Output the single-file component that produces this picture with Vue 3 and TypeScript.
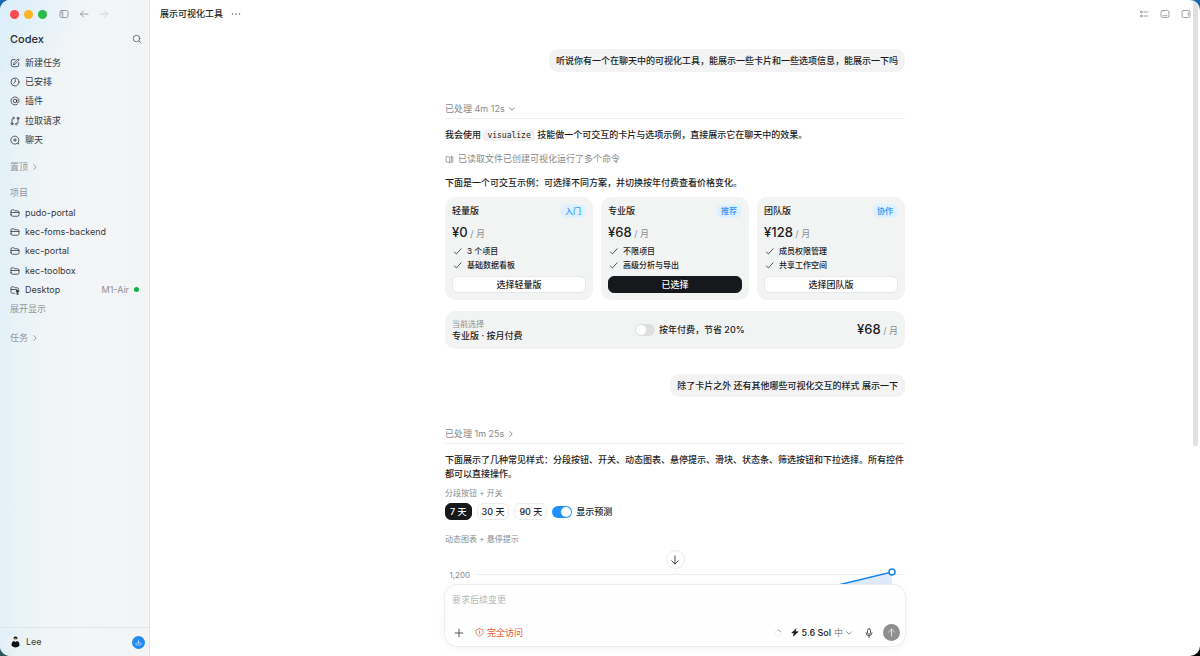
<script setup lang="ts">
import { computed, ref } from 'vue'

interface Plan {
  id: string
  name: string
  tag: string
  price: number
  features: string[]
}

const navItems = [
  { icon: 'compose', label: '新建任务' },
  { icon: 'clock', label: '已安排' },
  { icon: 'at', label: '插件' },
  { icon: 'pull', label: '拉取请求' },
  { icon: 'chat', label: '聊天' },
]

const projects = [
  { name: 'pudo-portal', host: '' },
  { name: 'kec-foms-backend', host: '' },
  { name: 'kec-portal', host: '' },
  { name: 'kec-toolbox', host: '' },
  { name: 'Desktop', host: 'M1-Air' },
]

const plans: Plan[] = [
  { id: 'lite', name: '轻量版', tag: '入门', price: 0, features: ['3 个项目', '基础数据看板'] },
  { id: 'pro', name: '专业版', tag: '推荐', price: 68, features: ['不限项目', '高级分析与导出'] },
  { id: 'team', name: '团队版', tag: '协作', price: 128, features: ['成员权限管理', '共享工作空间'] },
]

const ranges = [7, 30, 90]
const selectedId = ref('pro')
const yearly = ref(false)
const range = ref(7)
const forecast = ref(true)
const draft = ref('')

const selected = computed(() => plans.find((p) => p.id === selectedId.value) ?? plans[0])
function cost(price: number): number {
  return yearly.value ? Math.round(price * 0.8) : price
}
</script>

<template>
  <div class="desktop">
    <div class="window">
      <aside class="sidebar">
        <div class="chrome">
          <i class="light red"></i><i class="light amber"></i><i class="light green"></i>
          <button class="icon-btn panel" aria-label="侧边栏">
            <svg viewBox="0 0 20 20"><rect x="2" y="3" width="16" height="14" rx="3" /><path d="M7.5 3v14M4.5 7h1M4.5 10h1" /></svg>
          </button>
          <button class="icon-btn" aria-label="后退">
            <svg viewBox="0 0 20 20"><path d="M18 10H3M9 4l-6 6 6 6" /></svg>
          </button>
          <button class="icon-btn faint" aria-label="前进">
            <svg viewBox="0 0 20 20"><path d="M2 10h15M11 4l6 6-6 6" /></svg>
          </button>
        </div>

        <div class="brand">
          <h1>Codex</h1>
          <button class="icon-btn dark" aria-label="搜索">
            <svg viewBox="0 0 20 20"><circle cx="9" cy="9" r="6.5" /><path d="M14 14l4 4" /></svg>
          </button>
        </div>

        <nav>
          <ul class="rows nav-rows">
            <li v-for="item in navItems" :key="item.label">
              <a href="#" class="row">
                <svg viewBox="0 0 20 20">
                  <template v-if="item.icon === 'compose'">
                    <path d="M10 3H6a3.500 3.500 0 0 0-3.500 3.500V14A3.500 3.500 0 0 0 6 17.500h8a3.500 3.500 0 0 0 3.500-3.500v-4" />
                    <path d="M7 13l1-3.500 7-7a1.700 1.700 0 0 1 2.500 2.500l-7 7z" />
                  </template>
                  <template v-else-if="item.icon === 'clock'">
                    <circle cx="10" cy="10" r="8" /><path d="M10.500 5v5l-3 2.500" />
                  </template>
                  <template v-else-if="item.icon === 'at'">
                    <circle cx="10" cy="10" r="3.500" />
                    <path d="M13.500 7v4.500c0 3 4.500 2.500 4.500-1.500a8 8 0 1 0-3.500 6.600" />
                  </template>
                  <template v-else-if="item.icon === 'pull'">
                    <circle cx="4" cy="15.500" r="2" /><circle cx="16" cy="4.500" r="2" />
                    <path d="M4 13.500V7q0-3 3-3h1.500M6.500 1.500L9 4 6.500 6.500M16 6.500V13q0 3-3 3h-1.500M13.500 13.500L11 16l2.500 2.500" />
                  </template>
                  <template v-else>
                    <path d="M17 17.500l-.600-3A8 8 0 1 0 14 17z" /><path d="M10 7v6M7 10h6" />
                  </template>
                </svg>
                <span>{{ item.label }}</span>
              </a>
            </li>
          </ul>
        </nav>

        <button class="section pinned">
          置顶
          <svg viewBox="0 0 10 10"><path d="M3 1l4 4-4 4" /></svg>
        </button>
        <h2 class="section projects">项目</h2>
        <ul class="rows project-rows">
          <li v-for="project in projects" :key="project.name">
            <a href="#" class="row">
              <svg viewBox="0 0 20 20">
                <template v-if="project.host">
                  <path d="M9 16.500H5A3 3 0 0 1 2 13.500V6a2.500 2.500 0 0 1 2.500-2.500H7l2.500 2h5A3 3 0 0 1 17.500 8.500M2 9h11" />
                  <circle cx="15" cy="12.500" r="2.500" class="solid" /><path d="M12.500 18h5M15 15v3" />
                </template>
                <template v-else>
                  <path d="M2 13.500V6a2.500 2.500 0 0 1 2.500-2.500H7l2.500 2h5.500a3 3 0 0 1 3 3v5a3 3 0 0 1-3 3H5a3 3 0 0 1-3-3zM2 9h16" />
                </template>
              </svg>
              <span>{{ project.name }}</span>
              <span v-if="project.host" class="host">{{ project.host }}<i class="online"></i></span>
            </a>
          </li>
          <li><button class="row more">展开显示</button></li>
        </ul>
        <button class="section tasks">
          任务
          <svg viewBox="0 0 10 10"><path d="M3 1l4 4-4 4" /></svg>
        </button>

        <footer class="account">
          <svg class="avatar" viewBox="0 0 20 24">
            <circle cx="10" cy="5" r="4" fill="#c9a48d" /><path d="M5.500 5Q5 0 10 0t4.500 5Q10 2 5.500 5z" fill="#111" />
            <path d="M7.500 8h5l1 3h-7z" fill="#f6f6f6" />
            <path d="M1 20q0-9 6-10l3 2 3-2q6 1 6 10-2 4-9 4t-9-4z" fill="#101112" />
          </svg>
          <span>Lee</span>
          <button class="update" aria-label="下载更新">
            <svg viewBox="0 0 20 20"><path d="M10 3v9M6.500 9l3.500 3.500L13.500 9M3 12v4q0 1 1 1h12q1 0 1-1v-4" /></svg>
          </button>
        </footer>
      </aside>

      <main class="main">
        <header class="topbar">
          <h2>展示可视化工具</h2>
          <button class="icon-btn dark" aria-label="更多">
            <svg viewBox="0 0 20 20" class="dots"><circle cx="3" cy="10" r="1.500" /><circle cx="10" cy="10" r="1.500" /><circle cx="17" cy="10" r="1.500" /></svg>
          </button>
          <div class="tools">
            <button class="icon-btn" aria-label="列表">
              <svg viewBox="0 0 20 20"><circle cx="4.500" cy="6" r="2" /><circle cx="4.500" cy="14" r="2" /><path d="M10 6h8M10 14h8" /></svg>
            </button>
            <button class="icon-btn" aria-label="底部面板">
              <svg viewBox="0 0 20 20"><rect x="2" y="3" width="16" height="14" rx="3" /><path d="M6 13.500h8" /></svg>
            </button>
            <button class="icon-btn" aria-label="右侧面板">
              <svg viewBox="0 0 20 20"><rect x="2" y="3" width="16" height="14" rx="3" /><path d="M14.500 7v6" /></svg>
            </button>
          </div>
        </header>

        <div class="thread">
          <p class="bubble">听说你有一个在聊天中的可视化工具，能展示一些卡片和一些选项信息，能展示一下吗</p>

          <button class="status">
            已处理 4m 12s
            <svg viewBox="0 0 10 10"><path d="M1 3l4 4 4-4" /></svg>
          </button>
          <p class="para first">我会使用 <code>visualize</code> 技能做一个可交互的卡片与选项示例，直接展示它在聊天中的效果。</p>
          <p class="activity">
            <svg viewBox="0 0 20 20"><path d="M10 5.500Q7 2.500 2.500 3.500v12q4.500-1 7.500 1.500zM10 5.500l4.500-3v12L10 17M14.500 4h3v12H14" /></svg>
            已读取文件已创建可视化运行了多个命令
          </p>
          <p class="para">下面是一个可交互示例：可选择不同方案，并切换按年付费查看价格变化。</p>

          <section class="plans">
            <article v-for="plan in plans" :key="plan.id" class="plan">
              <header><h3>{{ plan.name }}</h3><span class="tag">{{ plan.tag }}</span></header>
              <p class="price"><strong>¥{{ cost(plan.price) }}</strong> / 月</p>
              <ul>
                <li v-for="feature in plan.features" :key="feature">
                  <svg viewBox="0 0 20 20"><path d="M3 11l4.500 4.500L18 4" /></svg>{{ feature }}
                </li>
              </ul>
              <button :class="{ chosen: plan.id === selectedId }" @click="selectedId = plan.id">
                {{ plan.id === selectedId ? '已选择' : '选择' + plan.name }}
              </button>
            </article>
          </section>

          <section class="summary">
            <div>
              <small>当前选择</small>
              <b>{{ selected.name }} · {{ yearly ? '按年付费' : '按月付费' }}</b>
            </div>
            <label class="toggle"><input v-model="yearly" type="checkbox" />按年付费，节省 20%</label>
            <p class="price"><strong>¥{{ cost(selected.price) }}</strong> / 月</p>
          </section>

          <p class="bubble later">除了卡片之外 还有其他哪些可视化交互的样式 展示一下</p>

          <button class="status">
            已处理 1m 25s
            <svg viewBox="0 0 10 10"><path d="M3 1l4 4-4 4" /></svg>
          </button>
          <p class="para first">下面展示了几种常见样式：分段按钮、开关、动态图表、悬停提示、滑块、状态条、筛选按钮和下拉选择。所有控件都可以直接操作。</p>

          <h4>分段按钮 + 开关</h4>
          <div class="segments">
            <button v-for="days in ranges" :key="days" :class="{ chosen: days === range }" @click="range = days">{{ days }} 天</button>
            <label class="toggle"><input v-model="forecast" type="checkbox" />显示预测</label>
          </div>

          <h4 class="chart-title">动态图表 + 悬停提示</h4>
          <svg class="chart" viewBox="0 0 460 80">
            <path class="area" d="M340 48L389 37L447 23V80H340z" />
            <path class="grid" d="M31 25.500H460" />
            <text x="25" y="29" text-anchor="end">1,200</text>
            <path class="line" d="M340 48L389 37L447 23" />
            <circle cx="447" cy="23" r="3" />
          </svg>
        </div>

        <div class="dock">
          <button class="jump" aria-label="滚动到底部">
            <svg viewBox="0 0 20 20"><path d="M10 2v16M3.500 11.500L10 18l6.500-6.500" /></svg>
          </button>
          <form class="composer" @submit.prevent>
            <textarea v-model="draft" rows="1" placeholder="要求后续变更" aria-label="消息"></textarea>
            <div class="actions">
              <button type="button" class="icon-btn black" aria-label="添加">
                <svg viewBox="0 0 20 20"><path d="M10 2.500v15M2.500 10h15" /></svg>
              </button>
              <button type="button" class="access">
                <svg viewBox="0 0 20 20"><path d="M10 1.500q4 2.500 7.500 2.500c2 7-1 12-7.500 14.500C3.500 16 .5 11 2.500 4Q6 4 10 1.500z" /><path d="M10 6.500v4.500M10 13.500v.500" /></svg>
                完全访问
              </button>
              <svg class="spinner" viewBox="0 0 20 20"><circle cx="10" cy="10" r="7.500" /><path d="M10 2.500a7.500 7.500 0 0 1 6.500 4" /></svg>
              <button type="button" class="model">
                <svg class="bolt" viewBox="0 0 20 20"><path d="M12 1L2 11h6l-2 8L18 8h-6.500z" /></svg>
                5.6 Sol <span>中</span>
                <svg class="caret" viewBox="0 0 10 10"><path d="M1 3l4 4 4-4" /></svg>
              </button>
              <button type="button" class="icon-btn black mic" aria-label="语音输入">
                <svg viewBox="0 0 20 20"><rect x="7" y="1.500" width="6" height="11" rx="3" /><path d="M4 9.500a6 6 0 0 0 12 0M10 15.500V19" /></svg>
              </button>
              <button class="send" aria-label="发送">
                <svg viewBox="0 0 20 20"><path d="M10 18V2.500M3.500 9L10 2.500 16.500 9" /></svg>
              </button>
            </div>
          </form>
        </div>
        <div class="scrollbar"></div>
      </main>
    </div>
  </div>
</template>

<style>
body {
  margin: 0;
}
</style>

<style scoped>
* {
  box-sizing: border-box;
}
h1, h2, h3, h4, p, ul {
  margin: 0;
  padding: 0;
  font-size: inherit;
  font-weight: inherit;
}
ul {
  list-style: none;
}
button, textarea {
  margin: 0;
  padding: 0;
  border: 0;
  background: none;
  color: inherit;
  font: inherit;
}
a {
  color: inherit;
  text-decoration: none;
}
svg {
  flex: none;
  fill: none;
  stroke: currentColor;
  stroke-width: 1.6;
  stroke-linecap: round;
  stroke-linejoin: round;
}
.desktop {
  height: 100vh;
  background: linear-gradient(90deg, transparent 50%, #000 50%) bottom / 100% 50% no-repeat,
    linear-gradient(#1769b0 50%, #2c5557 50%);
}
.window {
  display: flex;
  height: 100%;
  overflow: hidden;
  border-radius: 10px;
  background: #fff;
  color: #1c1d1f;
  font: 500 9px/14px Inter, "Noto Sans CJK SC", sans-serif;
}

.sidebar {
  display: flex;
  flex: 0 0 150px;
  flex-direction: column;
  border-right: 1px solid #e2e4e6;
  background: radial-gradient(ellipse 90px 90px at 0 0, #dceffa, transparent),
    linear-gradient(90deg, #e2f0f7, #eff4f7 25%, #f3f5f7 50%, #f3f4f6);
  color: #37393c;
  font-weight: 400;
}
.chrome {
  display: flex;
  align-items: center;
  gap: 10px;
  height: 28px;
  padding-left: 10px;
  color: #8b9095;
}
.light {
  width: 9px;
  height: 9px;
  margin-right: -5px;
  border-radius: 50%;
}
.red { background: #fb4a50; }
.amber { background: #fdb527; }
.green { margin-right: 2px; background: #2dba49; }
.icon-btn {
  display: flex;
  flex: none;
  width: 10px;
  height: 10px;
  color: #8b8d90;
}
.icon-btn svg {
  width: 10px;
  height: 10px;
}
.faint { color: #c9cdd1; }
.dark { color: #55585c; }
.black { color: #2d2f32; }
.brand {
  display: flex;
  align-items: center;
  justify-content: space-between;
  height: 22px;
  padding: 0 7px 0 10px;
}
.brand h1 {
  color: #2a2c2f;
  font-size: 11px;
  font-weight: 500;
}
.rows {
  display: grid;
  grid-auto-rows: 1fr;
}
.rows li {
  display: flex;
}
.nav-rows {
  height: 97px;
  margin-top: 3px;
}
.project-rows {
  height: 116px;
  margin-top: 3px;
}
.row {
  display: flex;
  flex: 1;
  align-items: center;
  gap: 5px;
  padding: 0 10px;
  white-space: nowrap;
}
.row svg {
  width: 10px;
  height: 10px;
}
.solid { fill: currentColor; }
.host {
  display: flex;
  align-items: center;
  gap: 5px;
  margin-left: auto;
  color: #8e9194;
}
.online {
  width: 5px;
  height: 5px;
  border-radius: 50%;
  background: #0bb43f;
}
.section, .more {
  color: #94989b;
}
.section {
  display: flex;
  align-items: center;
  gap: 4px;
  padding-left: 10px;
}
.section svg {
  width: 6px;
  height: 6px;
}
.pinned { margin-top: 10px; }
.projects { margin-top: 12px; }
.tasks { margin-top: 12px; }
.account {
  display: flex;
  align-items: center;
  gap: 6px;
  height: 29px;
  margin-top: auto;
  padding: 0 4px 0 11px;
  border-top: 1px solid #e2e6e8;
}
.avatar {
  width: 9px;
  height: 12px;
  stroke: none;
}
.update {
  display: grid;
  place-items: center;
  width: 13px;
  height: 13px;
  margin-left: auto;
  border-radius: 50%;
  background: #1f8bf5;
  color: #fff;
}
.update svg {
  width: 7px;
  height: 7px;
}

.main {
  position: relative;
  flex: 1;
  min-width: 0;
  overflow: hidden;
}
.topbar {
  display: flex;
  align-items: center;
  gap: 8px;
  height: 28px;
  padding: 0 9px 0 10px;
}
.tools {
  display: flex;
  gap: 11px;
  margin-left: auto;
}
.dots {
  fill: currentColor;
  stroke: none;
}
.thread {
  display: flex;
  flex-direction: column;
  width: 100%;
  max-width: 460px;
  margin: 0 auto;
  padding-top: 21px;
}
.bubble {
  align-self: flex-end;
  padding: 4px 7px;
  border-radius: 9px;
  background: #f3f3f3;
  line-height: 15px;
}
.later { margin-top: 25px; }
.status {
  display: flex;
  align-items: center;
  gap: 4px;
  margin-top: 30px;
  padding-bottom: 2px;
  border-bottom: 1px solid #eee;
  color: #87898b;
  font-weight: 400;
}
.status svg {
  width: 6px;
  height: 6px;
}
.para { margin-top: 10px; }
.para.first { margin-top: 9px; }
.para + .plans { margin-top: 7px; }
code {
  padding: 1px 4px;
  border-radius: 4px;
  background: #f1f1f1;
  font: 400 8px/10px "DejaVu Sans Mono", monospace;
}
.activity {
  display: flex;
  align-items: center;
  gap: 4px;
  margin-top: 10px;
  color: #87898b;
  font-weight: 400;
}
.activity svg {
  width: 9px;
  height: 9px;
}
.plans {
  display: grid;
  grid-template-columns: repeat(3, 1fr);
  gap: 8px;
}
.plan {
  display: flex;
  flex-direction: column;
  padding: 7px;
  border-radius: 10px;
  background: #f2f4f4;
}
.plan header {
  display: flex;
  justify-content: space-between;
}
.tag {
  padding: 0 5px;
  border-radius: 7px;
  background: #dff0ff;
  color: #2e94f7;
  font-size: 8px;
}
.price {
  color: #8b8d8f;
  font-weight: 400;
  line-height: 16px;
}
.price strong {
  color: #1c1d1f;
  font-size: 13px;
  font-weight: 500;
}
.plan .price { margin-top: 6px; }
.plan ul {
  margin: 2px 0 4px;
  font-size: 8px;
}
.plan li {
  display: flex;
  align-items: center;
  gap: 5px;
}
.plan li svg {
  width: 9px;
  height: 9px;
  margin-left: 1px;
}
.plan > button {
  height: 17px;
  border: 1px solid #e6e8e8;
  border-radius: 6px;
  background: #fff;
}
.plan > .chosen, .segments > .chosen {
  border-color: #17181b;
  background: #17181b;
  color: #fff;
}
.summary {
  display: flex;
  align-items: center;
  justify-content: space-between;
  margin-top: 11px;
  padding: 7px;
  border-radius: 10px;
  background: #f2f4f4;
}
.summary small, .summary b {
  display: block;
  font-weight: 500;
  line-height: 12px;
}
.summary small {
  color: #8b8d8f;
  font-size: 8px;
  font-weight: 400;
}
.toggle {
  display: flex;
  align-items: center;
  gap: 4px;
}
.toggle input {
  display: flex;
  width: 20px;
  height: 12px;
  margin: 0;
  padding: 1px;
  border-radius: 6px;
  background: #dedfdf;
  appearance: none;
}
.toggle input::before {
  width: 10px;
  height: 10px;
  border-radius: 50%;
  background: #fff;
  content: "";
}
.toggle input:checked {
  justify-content: flex-end;
  background: #1f8ffb;
}
h4 {
  margin-top: 6px;
  color: #8b8d8f;
  font-size: 8px;
  font-weight: 400;
  line-height: 12px;
}
.segments {
  display: flex;
  gap: 5px;
  margin-top: 4px;
}
.segments button {
  height: 17px;
  padding: 0 4px;
  border: 1px solid #ececec;
  border-radius: 6px;
}
.chart-title { margin-top: 13px; }
.chart {
  width: 100%;
  margin-top: 4px;
}
.chart text {
  fill: #87898b;
  stroke: none;
  font-size: 8px;
  font-weight: 400;
}
.grid {
  stroke: #ededed;
  stroke-width: 1;
}
.area {
  fill: #dfebfa;
  stroke: none;
}
.line, .chart circle {
  stroke: #1f86ee;
}
.chart circle { fill: #fff; }

.dock {
  position: absolute;
  right: 0;
  bottom: 0;
  left: 0;
  display: flex;
  flex-direction: column;
  align-items: center;
  gap: 16px;
  padding-bottom: 10px;
}
.jump {
  display: grid;
  place-items: center;
  width: 19px;
  height: 19px;
  border: 1px solid #ececec;
  border-radius: 50%;
  background: #fff;
}
.jump svg {
  width: 10px;
  height: 10px;
}
.composer {
  display: flex;
  flex-direction: column;
  justify-content: space-between;
  width: 100%;
  max-width: 460px;
  height: 61px;
  padding: 8px 5px 5px 7px;
  border-radius: 13px;
  background: linear-gradient(#fefefe, #fff);
  box-shadow: 0 0 0 1px #ededed, 0 2px 10px rgba(0, 0, 0, 0.06), 0 30px 0 20px #fff;
}
textarea {
  display: block;
  height: 14px;
  outline: 0;
  resize: none;
}
textarea::placeholder {
  color: #b5b7b9;
  font-weight: 400;
  opacity: 1;
}
.actions {
  display: flex;
  align-items: center;
}
.actions > .icon-btn:first-child {
  margin-left: 2px;
}
.access, .model {
  display: flex;
  align-items: center;
  gap: 3px;
}
.access {
  margin-left: 11px;
  color: #e2592f;
  font-weight: 400;
}
.access svg {
  width: 9px;
  height: 9px;
}
.spinner {
  width: 8px;
  height: 8px;
  margin-left: auto;
  color: #77797b;
}
.spinner circle { stroke: #e8e8e8; }
.model { margin-left: 9px; }
.model span {
  color: #8b8d8f;
  font-weight: 400;
}
.bolt {
  width: 8px;
  height: 9px;
  fill: currentColor;
}
.caret {
  width: 6px;
  height: 6px;
  color: #87898b;
}
.mic { margin: 0 9px 0 12px; }
.send {
  display: grid;
  place-items: center;
  width: 17px;
  height: 17px;
  border-radius: 50%;
  background: #8e8f90;
  color: #fff;
}
.send svg {
  width: 9px;
  height: 9px;
}
.scrollbar {
  position: absolute;
  top: 0;
  right: 2px;
  width: 5px;
  height: 68%;
  border-radius: 0 0 3px 3px;
  background: #e1e1e1;
}
</style>
